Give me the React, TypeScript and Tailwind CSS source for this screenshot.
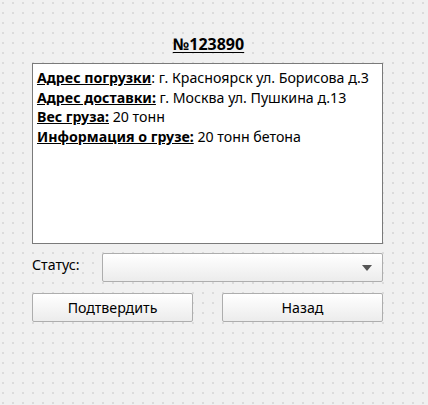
export default function App() {
  return (
    <div
      className="w-[428px] h-[405px] bg-[#f0f0f0] bg-[radial-gradient(#c2c2c2_0.6px,transparent_0.8px)] bg-[length:10px_10px] bg-[position:-2px_-2px] font-['Noto_Sans',sans-serif] text-[14.2px] text-black"
    >
      <div className="pl-[32px] pr-[45px] pt-[34px]">
        {/* Order number */}
        <h1 className="text-center text-[16px] font-bold underline underline-offset-2 leading-[20px] pl-[2px]">
          №123890
        </h1>

        {/* Order info */}
        <div className="mt-[9px] h-[181px] border border-[#7a7a7a] bg-white px-[4px] pt-[4px] leading-[19.6px]">
          <p>
            <b className="underline">Адрес погрузки</b>: г. Красноярск ул. Борисова д.3
          </p>
          <p>
            <b className="underline">Адрес доставки:</b> г. Москва ул. Пушкина д.13
          </p>
          <p>
            <b className="underline">Вес груза:</b> 20 тонн
          </p>
          <p>
            <b className="underline">Информация о грузе:</b> 20 тонн бетона
          </p>
        </div>

        {/* Status */}
        <div className="mt-[9px] flex items-start">
          <span className="w-[70px] leading-[20px] pt-[2px]">Статус:</span>
          <div className="flex-1 h-[29px] rounded-[2px] border border-[#adadad] bg-gradient-to-b from-[#ffffff] to-[#ececec] flex items-center justify-end pr-[10px]">
            <svg width="10" height="6" viewBox="0 0 10 6">
              <path d="M0 0 L10 0 L5 6 Z" fill="#555" />
            </svg>
          </div>
        </div>

        {/* Actions */}
        <div className="mt-[11px] flex justify-between">
          <button className="w-[161px] h-[29px] rounded-[2px] border border-[#adadad] bg-gradient-to-b from-[#ffffff] to-[#ececec] leading-[20px]">
            Подтвердить
          </button>
          <button className="w-[161px] h-[29px] rounded-[2px] border border-[#adadad] bg-gradient-to-b from-[#ffffff] to-[#ececec] leading-[20px]">
            Назад
          </button>
        </div>
      </div>
    </div>
  );
}
